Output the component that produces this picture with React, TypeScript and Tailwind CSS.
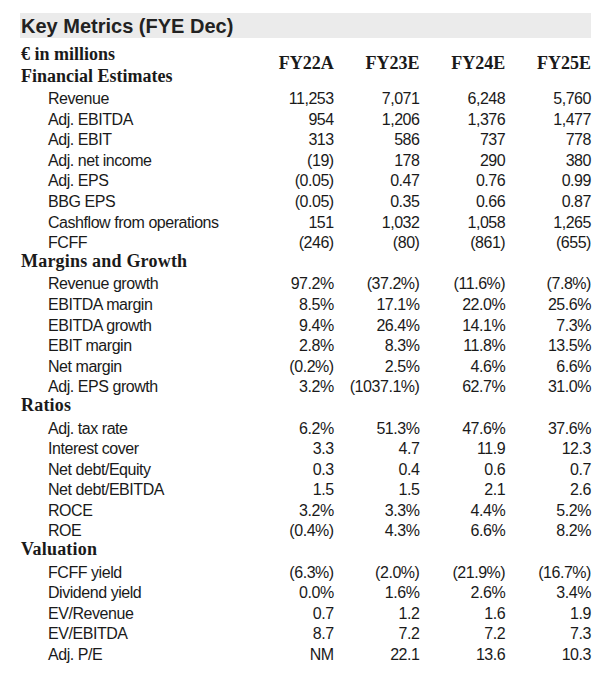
type Row = { label: string; values: [string, string, string, string] };
type Section = { title: string; rows: Row[] };

const years = ["FY22A", "FY23E", "FY24E", "FY25E"];

const sections: Section[] = [
  {
    title: "Financial Estimates",
    rows: [
      { label: "Revenue", values: ["11,253", "7,071", "6,248", "5,760"] },
      { label: "Adj. EBITDA", values: ["954", "1,206", "1,376", "1,477"] },
      { label: "Adj. EBIT", values: ["313", "586", "737", "778"] },
      { label: "Adj. net income", values: ["(19)", "178", "290", "380"] },
      { label: "Adj. EPS", values: ["(0.05)", "0.47", "0.76", "0.99"] },
      { label: "BBG EPS", values: ["(0.05)", "0.35", "0.66", "0.87"] },
      { label: "Cashflow from operations", values: ["151", "1,032", "1,058", "1,265"] },
      { label: "FCFF", values: ["(246)", "(80)", "(861)", "(655)"] },
    ],
  },
  {
    title: "Margins and Growth",
    rows: [
      { label: "Revenue growth", values: ["97.2%", "(37.2%)", "(11.6%)", "(7.8%)"] },
      { label: "EBITDA margin", values: ["8.5%", "17.1%", "22.0%", "25.6%"] },
      { label: "EBITDA growth", values: ["9.4%", "26.4%", "14.1%", "7.3%"] },
      { label: "EBIT margin", values: ["2.8%", "8.3%", "11.8%", "13.5%"] },
      { label: "Net margin", values: ["(0.2%)", "2.5%", "4.6%", "6.6%"] },
      { label: "Adj. EPS growth", values: ["3.2%", "(1037.1%)", "62.7%", "31.0%"] },
    ],
  },
  {
    title: "Ratios",
    rows: [
      { label: "Adj. tax rate", values: ["6.2%", "51.3%", "47.6%", "37.6%"] },
      { label: "Interest cover", values: ["3.3", "4.7", "11.9", "12.3"] },
      { label: "Net debt/Equity", values: ["0.3", "0.4", "0.6", "0.7"] },
      { label: "Net debt/EBITDA", values: ["1.5", "1.5", "2.1", "2.6"] },
      { label: "ROCE", values: ["3.2%", "3.3%", "4.4%", "5.2%"] },
      { label: "ROE", values: ["(0.4%)", "4.3%", "6.6%", "8.2%"] },
    ],
  },
  {
    title: "Valuation",
    rows: [
      { label: "FCFF yield", values: ["(6.3%)", "(2.0%)", "(21.9%)", "(16.7%)"] },
      { label: "Dividend yield", values: ["0.0%", "1.6%", "2.6%", "3.4%"] },
      { label: "EV/Revenue", values: ["0.7", "1.2", "1.6", "1.9"] },
      { label: "EV/EBITDA", values: ["8.7", "7.2", "7.2", "7.3"] },
      { label: "Adj. P/E", values: ["NM", "22.1", "13.6", "10.3"] },
    ],
  },
];

const serif = "font-['Liberation_Serif',serif]";
const grid = "grid grid-cols-[228px_repeat(4,85.75px)]";

export default function App() {
  return (
    <div className="w-[611px] h-[686px] bg-white px-[20px] pt-[13px] text-[#1a1a1a] font-['Liberation_Sans',Arial,sans-serif]">
      <div className="h-[25px] bg-[#ebebeb] pl-[1px] text-[20px] font-bold leading-[26px] text-[#222]">
        Key Metrics (FYE Dec)
      </div>

      <div className={`${grid} items-center h-[50px]`}>
        <div className={`${serif} font-bold text-[18px] leading-[22px] pl-[1px] pt-[4px]`}>
          <div>€ in millions</div>
          <div>Financial Estimates</div>
        </div>
        {years.map((y) => (
          <div key={y} className={`${serif} font-bold text-[18px] text-right`}>
            {y}
          </div>
        ))}
      </div>

      {sections.map((section, si) => (
        <div key={section.title}>
          {si > 0 && (
            <div className={`${serif} font-bold text-[18px] h-[20.6px] leading-[17px] pl-[1px] tracking-[0.2px]`}>
              {section.title}
            </div>
          )}
          {section.rows.map((row) => (
            <div
              key={row.label}
              className={`${grid} h-[20.6px] text-[16px] tracking-[-0.45px] leading-[22px]`}
            >
              <div className="pl-[28px]">{row.label}</div>
              {row.values.map((v, i) => (
                <div key={i} className="text-right">
                  {v}
                </div>
              ))}
            </div>
          ))}
        </div>
      ))}
    </div>
  );
}
